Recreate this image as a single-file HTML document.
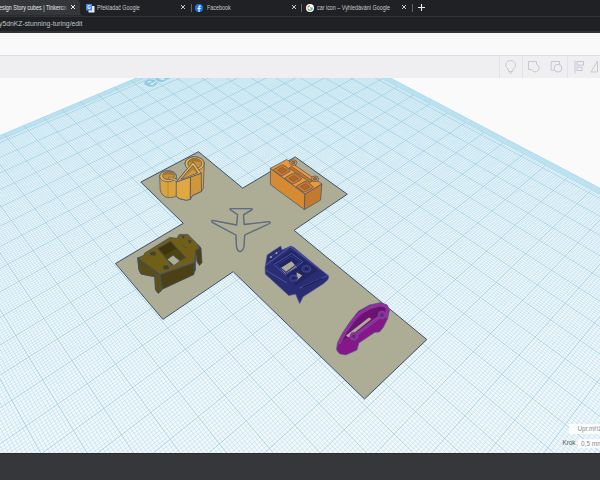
<!DOCTYPE html>
<html><head><meta charset="utf-8"><style>
html,body{margin:0;padding:0;width:600px;height:480px;overflow:hidden;background:#fafafa;font-family:"Liberation Sans",sans-serif}
.abs{position:absolute}
#tabs{left:0;top:0;width:600px;height:16px;background:#202124}
#toolbar{left:0;top:15.6px;width:600px;height:17.2px;background:#323337}
#omni{left:0;top:17.2px;width:600px;height:13.8px;background:#202124}
#head{left:0;top:32.5px;width:600px;height:22.5px;background:#f9f9fa;border-bottom:1px solid #dcdde2}
#tb{left:0;top:56px;width:600px;height:21.5px;background:#efeff2}
#bottom{left:0;top:453px;width:600px;height:27px;background:#36373b;border-top:1px solid #2a2b2e}
.t{position:absolute;top:3.5px;font-size:6.4px;line-height:8px;white-space:nowrap;color:#e8eaed;transform-origin:0 50%;transform:scaleX(0.84)}
.x{position:absolute;top:3px;width:8px;height:8px}
.sep{position:absolute;top:4px;width:1px;height:8px;background:#5f6368}
</style></head><body>
<svg class="abs" style="left:0;top:0" width="600" height="480" viewBox="0 0 600 480">
<rect x="0" y="0" width="600" height="480" fill="#fafafa"/>
<path d="M277.3 18.6L732.8 258.1L148.3 1115.7L-186.7 214.4Z" fill="#bfe3f1" stroke="#b0dcee" stroke-width="1"/>
<path d="M276.3 22.1L729.3 263.1L148.3 1115.7L-185.2 218.6Z" fill="#f4f8fa" stroke="#a9d3e6" stroke-width="0.6"/>
<path d="M280.6 20.3L-185.2 218.6M281.7 20.9L-184.7 220.0M284.0 22.1L-183.6 222.9M285.1 22.7L-183.1 224.3M286.2 23.3L-182.5 225.8M287.4 23.9L-182.0 227.2M288.5 24.5L-181.5 228.7M289.7 25.1L-180.9 230.1M290.8 25.7L-180.4 231.6M292.0 26.3L-179.8 233.1M293.1 26.9L-179.3 234.6M295.4 28.1L-178.1 237.6M296.6 28.7L-177.6 239.1M297.8 29.4L-177.0 240.6M299.0 30.0L-176.4 242.1M300.1 30.6L-175.9 243.7M301.3 31.2L-175.3 245.2M302.5 31.8L-174.7 246.8M303.7 32.5L-174.1 248.3M304.9 33.1L-173.6 249.9M307.3 34.4L-172.4 253.1M308.5 35.0L-171.8 254.7M309.7 35.6L-171.2 256.3M310.9 36.3L-170.6 257.9M312.2 36.9L-170.0 259.5M313.4 37.6L-169.4 261.2M314.6 38.2L-168.8 262.8M315.8 38.9L-168.2 264.4M317.1 39.5L-167.5 266.1M319.6 40.8L-166.3 269.5M320.8 41.5L-165.7 271.1M322.1 42.1L-165.0 272.8M323.3 42.8L-164.4 274.5M324.6 43.5L-163.8 276.3M325.9 44.1L-163.1 278.0M327.1 44.8L-162.5 279.7M328.4 45.5L-161.8 281.5M329.7 46.2L-161.2 283.2M332.3 47.5L-159.9 286.8M333.6 48.2L-159.2 288.5M334.9 48.9L-158.5 290.3M336.2 49.6L-157.9 292.2M337.5 50.3L-157.2 294.0M338.8 50.9L-156.5 295.8M340.1 51.6L-155.8 297.6M341.5 52.3L-155.1 299.5M342.8 53.0L-154.4 301.3M345.5 54.4L-153.0 305.1M346.8 55.1L-152.3 307.0M348.2 55.9L-151.6 308.9M349.5 56.6L-150.9 310.8M350.9 57.3L-150.2 312.7M352.2 58.0L-149.5 314.7M353.6 58.7L-148.8 316.6M355.0 59.4L-148.0 318.6M356.4 60.2L-147.3 320.6M359.1 61.6L-145.8 324.6M360.5 62.4L-145.1 326.6M361.9 63.1L-144.3 328.6M363.3 63.8L-143.6 330.6M364.8 64.6L-142.8 332.7M366.2 65.3L-142.0 334.7M367.6 66.1L-141.3 336.8M369.0 66.8L-140.5 338.9M370.5 67.6L-139.7 341.0M373.3 69.1L-138.1 345.2M374.8 69.9L-137.3 347.4M376.2 70.6L-136.5 349.5M377.7 71.4L-135.7 351.7M379.2 72.2L-134.9 353.9M380.6 72.9L-134.1 356.1M382.1 73.7L-133.3 358.3M383.6 74.5L-132.4 360.5M385.1 75.3L-131.6 362.7M388.1 76.8L-129.9 367.3M389.6 77.6L-129.1 369.5M391.1 78.4L-128.2 371.8M392.6 79.2L-127.4 374.1M394.1 80.0L-126.5 376.5M395.7 80.8L-125.6 378.8M397.2 81.6L-124.8 381.2M398.7 82.4L-123.9 383.5M400.3 83.3L-123.0 385.9M403.4 84.9L-121.2 390.8M405.0 85.7L-120.3 393.2M406.5 86.5L-119.4 395.7M408.1 87.4L-118.5 398.1M409.7 88.2L-117.5 400.6M411.3 89.0L-116.6 403.1M412.9 89.9L-115.7 405.6M414.5 90.7L-114.7 408.2M416.1 91.6L-113.8 410.7M419.3 93.3L-111.9 415.9M421.0 94.1L-110.9 418.5M422.6 95.0L-109.9 421.1M424.2 95.9L-108.9 423.8M425.9 96.7L-107.9 426.5M427.5 97.6L-106.9 429.1M429.2 98.5L-105.9 431.8M430.9 99.3L-104.9 434.6M432.5 100.2L-103.9 437.3M435.9 102.0L-101.8 442.9M437.6 102.9L-100.8 445.7M439.3 103.8L-99.7 448.5M441.0 104.7L-98.7 451.3M442.7 105.6L-97.6 454.2M444.5 106.5L-96.6 457.1M446.2 107.4L-95.5 460.0M447.9 108.3L-94.4 462.9M449.7 109.2L-93.3 465.9M453.2 111.1L-91.1 471.8M455.0 112.0L-89.9 474.8M456.7 112.9L-88.8 477.9M458.5 113.9L-87.7 480.9M460.3 114.8L-86.5 484.0M462.1 115.8L-85.4 487.1M463.9 116.7L-84.2 490.3M465.7 117.7L-83.0 493.4M467.5 118.6L-81.9 496.6M471.2 120.6L-79.5 503.0M473.1 121.5L-78.3 506.3M474.9 122.5L-77.0 509.6M476.8 123.5L-75.8 512.9M478.6 124.5L-74.6 516.2M480.5 125.4L-73.3 519.6M482.4 126.4L-72.1 522.9M484.3 127.4L-70.8 526.4M486.2 128.4L-69.5 529.8M490.0 130.4L-66.9 536.8M491.9 131.5L-65.6 540.3M493.9 132.5L-64.3 543.8M495.8 133.5L-63.0 547.4M497.8 134.5L-61.6 551.0M499.7 135.6L-60.3 554.7M501.7 136.6L-58.9 558.3M503.7 137.6L-57.5 562.0M505.7 138.7L-56.1 565.8M509.7 140.8L-53.3 573.3M511.7 141.8L-51.9 577.2M513.7 142.9L-50.5 581.0M515.7 144.0L-49.0 584.9M517.8 145.0L-47.6 588.8M519.8 146.1L-46.1 592.8M521.9 147.2L-44.6 596.8M523.9 148.3L-43.1 600.8M526.0 149.4L-41.6 604.9M530.2 151.6L-38.5 613.1M532.3 152.7L-37.0 617.3M534.4 153.8L-35.4 621.5M536.6 154.9L-33.9 625.8M538.7 156.0L-32.3 630.0M540.8 157.2L-30.7 634.4M543.0 158.3L-29.0 638.7M545.2 159.4L-27.4 643.1M547.3 160.6L-25.7 647.6M551.7 162.9L-22.4 656.6M553.9 164.0L-20.7 661.1M556.1 165.2L-19.0 665.7M558.4 166.4L-17.3 670.4M560.6 167.6L-15.5 675.1M562.8 168.7L-13.8 679.8M565.1 169.9L-12.0 684.6M567.4 171.1L-10.2 689.4M569.7 172.3L-8.4 694.3M574.2 174.7L-4.7 704.2M576.6 176.0L-2.8 709.2M578.9 177.2L-0.9 714.3M581.2 178.4L1.0 719.4M583.6 179.6L2.9 724.6M585.9 180.9L4.8 729.8M588.3 182.1L6.8 735.0M590.7 183.4L8.8 740.4M593.1 184.6L10.7 745.7M597.9 187.2L14.8 756.6M600.3 188.4L16.9 762.2M602.8 189.7L18.9 767.8M605.2 191.0L21.0 773.4M607.7 192.3L23.2 779.1M610.1 193.6L25.3 784.9M612.6 194.9L27.5 790.7M615.1 196.2L29.7 796.6M617.6 197.6L31.9 802.6M622.7 200.2L36.4 814.7M625.3 201.6L38.7 820.8M627.8 202.9L41.0 827.0M630.4 204.3L43.3 833.3M633.0 205.6L45.7 839.7M635.6 207.0L48.1 846.1M638.2 208.4L50.5 852.6M640.8 209.8L52.9 859.1M643.5 211.1L55.4 865.8M648.8 213.9L60.4 879.3M651.5 215.4L62.9 886.1M654.2 216.8L65.5 893.1M656.9 218.2L68.1 900.1M659.6 219.6L70.8 907.2M662.4 221.1L73.4 914.4M665.1 222.5L76.1 921.6M667.9 224.0L78.9 929.0M670.7 225.4L81.6 936.4M676.3 228.4L87.2 951.5M679.1 229.9L90.1 959.2M682.0 231.4L93.0 967.0M684.8 232.9L95.9 974.9M687.7 234.4L98.9 982.9M690.6 235.9L101.9 991.0M693.5 237.4L105.0 999.2M696.4 239.0L108.0 1007.5M699.4 240.5L111.2 1015.9M705.3 243.6L117.5 1033.0M708.3 245.2L120.8 1041.7M711.3 246.8L124.0 1050.5M714.3 248.4L127.4 1059.5M717.3 250.0L130.7 1068.5M720.4 251.6L134.2 1077.7M723.4 253.2L137.6 1087.0M726.5 254.8L141.1 1096.4M729.6 256.4L144.7 1106.0M272.4 20.6L728.9 263.8M271.2 21.1L727.9 265.2M268.8 22.1L725.9 268.1M267.6 22.7L725.0 269.5M266.4 23.2L724.0 270.9M265.2 23.7L723.0 272.4M264.0 24.2L722.0 273.9M262.8 24.7L721.0 275.3M261.5 25.2L720.0 276.8M260.3 25.7L719.0 278.3M259.1 26.3L718.0 279.7M256.6 27.3L715.9 282.7M255.4 27.8L714.9 284.2M254.1 28.3L713.9 285.8M252.9 28.9L712.9 287.3M251.6 29.4L711.8 288.8M250.4 29.9L710.8 290.3M249.1 30.5L709.7 291.9M247.9 31.0L708.7 293.4M246.6 31.5L707.6 295.0M244.1 32.6L705.5 298.1M242.8 33.1L704.4 299.7M241.5 33.7L703.3 301.3M240.2 34.2L702.2 302.9M238.9 34.8L701.1 304.5M237.7 35.3L700.0 306.1M236.4 35.8L698.9 307.7M235.1 36.4L697.8 309.3M233.8 36.9L696.7 311.0M231.2 38.0L694.5 314.3M229.8 38.6L693.3 315.9M228.5 39.2L692.2 317.6M227.2 39.7L691.0 319.3M225.9 40.3L689.9 321.0M224.6 40.8L688.7 322.7M223.2 41.4L687.6 324.4M221.9 42.0L686.4 326.1M220.6 42.5L685.2 327.8M217.9 43.7L682.9 331.3M216.5 44.2L681.7 333.0M215.2 44.8L680.5 334.8M213.8 45.4L679.3 336.5M212.4 45.9L678.1 338.3M211.1 46.5L676.9 340.1M209.7 47.1L675.6 341.9M208.3 47.7L674.4 343.7M207.0 48.3L673.2 345.5M204.2 49.4L670.7 349.1M202.8 50.0L669.4 351.0M201.4 50.6L668.2 352.8M200.0 51.2L666.9 354.7M198.6 51.8L665.6 356.5M197.2 52.4L664.4 358.4M195.8 53.0L663.1 360.3M194.4 53.6L661.8 362.2M192.9 54.2L660.5 364.1M190.1 55.4L657.9 368.0M188.7 56.0L656.5 369.9M187.2 56.6L655.2 371.9M185.8 57.2L653.9 373.8M184.3 57.8L652.5 375.8M182.9 58.4L651.2 377.8M181.4 59.0L649.8 379.8M180.0 59.6L648.4 381.8M178.5 60.3L647.1 383.8M175.6 61.5L644.3 387.9M174.1 62.1L642.9 389.9M172.6 62.7L641.5 392.0M171.1 63.4L640.1 394.0M169.6 64.0L638.7 396.1M168.2 64.6L637.2 398.2M166.7 65.3L635.8 400.3M165.2 65.9L634.4 402.5M163.6 66.5L632.9 404.6M160.6 67.8L630.0 408.9M159.1 68.5L628.5 411.1M157.6 69.1L627.0 413.2M156.0 69.8L625.5 415.4M154.5 70.4L624.0 417.6M153.0 71.0L622.5 419.9M151.4 71.7L621.0 422.1M149.9 72.4L619.4 424.3M148.3 73.0L617.9 426.6M145.2 74.3L614.8 431.2M143.6 75.0L613.2 433.4M142.0 75.7L611.7 435.8M140.5 76.3L610.1 438.1M138.9 77.0L608.5 440.4M137.3 77.7L606.9 442.8M135.7 78.3L605.3 445.1M134.1 79.0L603.6 447.5M132.5 79.7L602.0 449.9M129.3 81.1L598.7 454.8M127.6 81.7L597.0 457.2M126.0 82.4L595.4 459.7M124.4 83.1L593.7 462.1M122.7 83.8L592.0 464.6M121.1 84.5L590.3 467.1M119.5 85.2L588.6 469.6M117.8 85.9L586.8 472.2M116.1 86.6L585.1 474.7M112.8 88.0L581.6 479.8M111.1 88.7L579.8 482.4M109.5 89.4L578.1 485.1M107.8 90.1L576.3 487.7M106.1 90.8L574.5 490.3M104.4 91.5L572.6 493.0M102.7 92.3L570.8 495.7M101.0 93.0L569.0 498.4M99.3 93.7L567.1 501.1M95.8 95.2L563.4 506.6M94.1 95.9L561.5 509.3M92.4 96.6L559.6 512.1M90.6 97.4L557.7 514.9M88.9 98.1L555.8 517.7M87.1 98.8L553.9 520.6M85.4 99.6L551.9 523.4M83.6 100.3L549.9 526.3M81.8 101.1L548.0 529.2M78.3 102.6L544.0 535.0M76.5 103.3L542.0 538.0M74.7 104.1L539.9 541.0M72.9 104.8L537.9 544.0M71.1 105.6L535.9 547.0M69.3 106.4L533.8 550.0M67.5 107.1L531.7 553.1M65.6 107.9L529.6 556.1M63.8 108.7L527.5 559.2M60.1 110.2L523.2 565.5M58.3 111.0L521.1 568.7M56.4 111.8L518.9 571.8M54.6 112.6L516.7 575.0M52.7 113.4L514.5 578.3M50.8 114.2L512.3 581.5M49.0 114.9L510.1 584.8M47.1 115.7L507.8 588.1M45.2 116.5L505.6 591.4M41.4 118.1L501.0 598.1M39.5 119.0L498.7 601.5M37.5 119.8L496.4 604.9M35.6 120.6L494.0 608.4M33.7 121.4L491.7 611.8M31.7 122.2L489.3 615.3M29.8 123.0L486.9 618.8M27.8 123.9L484.5 622.4M25.9 124.7L482.0 626.0M21.9 126.3L477.1 633.2M20.0 127.2L474.6 636.8M18.0 128.0L472.1 640.5M16.0 128.9L469.6 644.2M14.0 129.7L467.1 647.9M12.0 130.6L464.5 651.7M9.9 131.4L461.9 655.5M7.9 132.3L459.3 659.3M5.9 133.1L456.7 663.1M1.8 134.8L451.4 670.9M-0.3 135.7L448.7 674.8M-2.3 136.6L446.0 678.8M-4.4 137.5L443.3 682.8M-6.5 138.3L440.5 686.8M-8.5 139.2L437.8 690.9M-10.6 140.1L435.0 695.0M-12.7 141.0L432.2 699.1M-14.8 141.9L429.3 703.3M-19.1 143.6L423.6 711.7M-21.2 144.5L420.7 715.9M-23.3 145.4L417.8 720.2M-25.5 146.4L414.8 724.5M-27.6 147.3L411.9 728.9M-29.8 148.2L408.9 733.3M-31.9 149.1L405.9 737.7M-34.1 150.0L402.8 742.2M-36.3 150.9L399.7 746.7M-40.7 152.8L393.5 755.8M-42.9 153.7L390.4 760.4M-45.1 154.6L387.2 765.1M-47.4 155.6L384.0 769.8M-49.6 156.5L380.8 774.5M-51.8 157.5L377.5 779.3M-54.1 158.4L374.2 784.1M-56.3 159.4L370.9 789.0M-58.6 160.3L367.6 793.9M-63.2 162.3L360.8 803.8M-65.5 163.2L357.4 808.8M-67.8 164.2L353.9 813.9M-70.1 165.2L350.4 819.0M-72.4 166.2L346.9 824.2M-74.7 167.1L343.4 829.4M-77.0 168.1L339.8 834.7M-79.4 169.1L336.2 840.0M-81.7 170.1L332.5 845.3M-86.5 172.1L325.1 856.2M-88.9 173.1L321.4 861.7M-91.3 174.1L317.6 867.2M-93.7 175.1L313.8 872.8M-96.1 176.1L309.9 878.5M-98.5 177.2L306.0 884.2M-100.9 178.2L302.1 889.9M-103.4 179.2L298.1 895.8M-105.8 180.3L294.1 901.6M-110.7 182.3L286.0 913.5M-113.2 183.4L281.9 919.6M-115.7 184.4L277.8 925.7M-118.2 185.5L273.6 931.8M-120.7 186.5L269.3 938.0M-123.2 187.6L265.1 944.3M-125.7 188.7L260.7 950.6M-128.3 189.7L256.4 957.0M-130.8 190.8L252.0 963.5M-135.9 193.0L243.0 976.6M-138.5 194.1L238.5 983.3M-141.1 195.2L233.9 990.0M-143.7 196.3L229.3 996.8M-146.3 197.4L224.6 1003.6M-148.9 198.5L219.9 1010.6M-151.6 199.6L215.1 1017.6M-154.2 200.7L210.3 1024.7M-156.9 201.8L205.4 1031.8M-162.2 204.1L195.5 1046.3M-164.9 205.2L190.5 1053.7M-167.6 206.3L185.4 1061.2M-170.3 207.5L180.3 1068.7M-173.0 208.6L175.1 1076.3M-175.7 209.8L169.8 1084.0M-178.5 210.9L164.5 1091.8M-181.2 212.1L159.2 1099.7M-184.0 213.2L153.7 1107.6" stroke="#abdaec" stroke-width="0.5" fill="none"/>
<path d="M278.6 23.3L-184.1 221.5M290.0 29.4L-178.7 236.1M301.8 35.7L-173.0 251.5M314.0 42.2L-166.9 267.8M326.7 48.9L-160.5 285.0M339.8 55.9L-153.7 303.2M353.4 63.1L-146.6 322.6M367.6 70.7L-138.9 343.1M382.2 78.5L-130.8 365.0M397.5 86.6L-122.1 388.3M413.4 95.0L-112.8 413.3M429.9 103.8L-102.9 440.1M447.1 113.0L-92.2 468.8M465.1 122.5L-80.7 499.8M483.9 132.5L-68.2 533.3M503.4 142.9L-54.7 569.5M523.9 153.8L-40.1 609.0M545.4 165.3L-24.1 652.0M567.9 177.2L-6.5 699.2M591.5 189.8L12.8 751.2M616.3 202.9L34.1 808.6M642.3 216.8L57.9 872.5M669.8 231.4L84.4 943.9M698.8 246.8L114.3 1024.4M729.3 263.1L148.3 1115.7M270.0 21.6L726.9 266.6M257.9 26.8L717.0 281.2M245.3 32.1L706.5 296.5M232.5 37.5L695.6 312.6M219.2 43.1L684.1 329.5M205.6 48.8L671.9 347.3M191.5 54.8L659.2 366.0M177.0 60.9L645.7 385.8M162.1 67.2L631.4 406.7M146.7 73.7L616.4 428.9M130.9 80.4L600.4 452.3M114.5 87.3L583.4 477.3M97.6 94.4L565.3 503.8M80.1 101.8L546.0 532.1M62.0 109.4L525.4 562.4M43.3 117.3L503.3 594.8M23.9 125.5L479.6 629.5M3.8 134.0L454.1 667.0M-16.9 142.8L426.5 707.4M-38.5 151.9L396.6 751.2M-60.9 161.3L364.2 798.8M-84.1 171.1L328.8 850.7M-108.3 181.3L290.1 907.5M-133.4 191.9L247.5 970.0M-159.5 202.9L200.5 1039.0M-186.7 214.4L148.3 1115.7" stroke="#86c3dd" stroke-width="0.65" fill="none"/>
<path d="M198.5 151.7L242.7 188.1L295.2 156.9L347.3 194.2L294.1 230.3L426.8 339.5L364.5 399.0L233.2 271.7L162.9 319.4L115.5 263.5L183.3 223.3L140.8 182.1Z" fill="#acad94" stroke="#3d5070" stroke-width="1" stroke-linejoin="round"/>
<text transform="matrix(1.971 -0.858 1.331 1.006 148.4 88)" font-family="Liberation Sans" font-weight="bold" font-size="10" fill="#8fcbe3">ed</text>
<!-- airplane outline -->
<path d="M230.8 208.6C230 208.6 229.8 209.3 230.4 209.8L237.6 214.8L236.6 225L212.6 220.4C211.6 220.3 211.4 221.8 212.2 222.3L235.9 235L236.5 246.7C237 249.5 238.5 251.5 240 251.5C241.5 251.5 243.5 249.5 244.1 245.5L244.7 235L269.6 223.5C270.4 223 270 221.5 269 221.6L244.1 224.5L243.5 214.8L251.8 209.8C252.5 209.3 252.2 208.6 251.5 208.6Z" fill="none" stroke="#52617c" stroke-width="1.35" stroke-linejoin="round"/>
<path d="M230.8 208.6C230 208.6 229.8 209.3 230.4 209.8L237.6 214.8L236.6 225L212.6 220.4C211.6 220.3 211.4 221.8 212.2 222.3L235.9 235L236.5 246.7C237 249.5 238.5 251.5 240 251.5C241.5 251.5 243.5 249.5 244.1 245.5L244.7 235L269.6 223.5C270.4 223 270 221.5 269 221.6L244.1 224.5L243.5 214.8L251.8 209.8C252.5 209.3 252.2 208.6 251.5 208.6Z" fill="none" stroke="#7d879a" stroke-width="0.35" stroke-linejoin="round"/>
<!-- orange QAP on top arm -->
<g stroke="#41537a" stroke-width="0.75" stroke-linejoin="round">
 <path d="M159.7 176.3L160.2 190C161 194 164 197 168 197.6C171.5 197.8 174 197 176 196.2L179 198.5L186 200.2L190 199.3L192.5 195.5L197 193.5L201.5 191.3L203.3 188.5L204.2 163.8C204 159.5 199.5 156.8 194.6 156.8C189.5 156.8 185 159.5 185 163.8L187.5 168.5L176.25 181.9L176.3 176.3C176.3 173 172.5 170.8 168 170.8C163 170.9 159.7 173 159.7 176.3Z" fill="#dba33f"/>
 <path d="M176.3 181.9L190.5 177L190.3 199.5L186 200.2L179 198.5L176.2 196.2Z" fill="#e0a842"/>
 <path d="M190.5 177L201.3 173.1L201.5 191.3L192.5 195.5L190.3 199.5Z" fill="#cf9736"/>
 <path d="M168 181.8L168 197.6" fill="none" stroke="#b07c28" stroke-width="0.6"/>
 <ellipse cx="168" cy="176.3" rx="8.3" ry="5.5" fill="#e9b34e"/>
 <ellipse cx="168.5" cy="175.7" rx="6" ry="3.9" fill="#c7912f"/>
 <path d="M162.6 175.5C163.5 173.2 166 172 168.8 172C171.8 172 174 173.3 174.6 175.3C172 174.2 165.5 174.2 162.6 175.5Z" fill="#a87524" stroke="none"/>
 <path d="M169 176.6L178.5 180.2L177.5 181.8L168.5 178.2Z" fill="#e9b34e" stroke-width="0.5"/>
 <ellipse cx="194.6" cy="163.8" rx="9.6" ry="7" fill="#e9b34e"/>
 <ellipse cx="194.8" cy="163.5" rx="7" ry="5" fill="#c7912f"/>
 <path d="M188 162.8C189 159.8 191.8 158.6 194.8 158.6C198 158.6 200.8 160 201.6 162.6C198.8 161.2 191.5 161.2 188 162.8Z" fill="#a87524" stroke="none"/>
 <path d="M176.25 181.9L193.1 161.9L201.3 173.1Z" fill="#e9b34e"/>
 <path d="M180.8 179.3L192.8 165.6L197.9 172.7Z" fill="#b8852c"/>
 <path d="M183 178.3L193 170L196.5 172.8Z" fill="#d39c3a" stroke="none"/>
</g>
<!-- orange block on right arm -->
<g stroke="#46567a" stroke-width="0.75" stroke-linejoin="round">
 <path d="M270.4 168.3L305 194L304.3 209.6L270.4 184.6Z" fill="#d68a32"/>
 <path d="M305 194L321.9 183.9L320.6 200.1L304.3 209.6Z" fill="#c27a2d"/>
 <path d="M270.4 168.3L286.7 159.5L321.9 183.9L305 194Z" fill="#ec9834"/>
 <ellipse cx="293.3" cy="162.6" rx="3.6" ry="2.8" fill="#ec9834"/>
 <ellipse cx="293.3" cy="162.6" rx="1.8" ry="1.3" fill="#c26f20"/>
 <ellipse cx="315" cy="178.8" rx="3.6" ry="2.8" fill="#ec9834"/>
 <ellipse cx="315" cy="178.8" rx="1.8" ry="1.3" fill="#c26f20"/>
 <path d="M274.2 169.2L281.2 165.4C282.5 164.8 283.6 165 284.5 165.7L289.6 169.6C290.4 170.3 290.2 171.2 289.2 171.8L283 175.2C281.8 175.8 280.6 175.6 279.8 175L274.2 171C273.3 170.4 273.3 169.8 274.2 169.2Z" fill="#d27b24"/>
 <path d="M277.5 170L282.8 167.2L287 170.5L281.8 173.3Z" fill="#b9671c" stroke-width="0.5"/>
 <path d="M285.6 177.4L292.6 173.6C293.9 173 295 173.2 295.9 173.9L301 177.8C301.8 178.5 301.6 179.4 300.6 180L294.4 183.4C293.2 184 292 183.8 291.2 183.2L285.6 179.2C284.7 178.6 284.7 178 285.6 177.4Z" fill="#d27b24"/>
 <path d="M288.9 178.2L294.2 175.4L298.4 178.7L293.2 181.5Z" fill="#b9671c" stroke-width="0.5"/>
 <path d="M297.1 185.6L304.1 181.8C305.4 181.2 306.5 181.4 307.4 182.1L312.5 186C313.3 186.7 313.1 187.6 312.1 188.2L305.9 191.6C304.7 192.2 303.5 192 302.7 191.4L297.1 187.4C296.2 186.8 296.2 186.2 297.1 185.6Z" fill="#d27b24"/>
 <path d="M300.4 186.4L305.7 183.6L309.9 186.9L304.7 189.7Z" fill="#b9671c" stroke-width="0.5"/>
 <path d="M291.5 166.5L312.5 181L310 182.5L289 168Z" fill="#c9741f"/>
</g>
<!-- olive box on left arm -->
<g stroke="#3e5070" stroke-width="0.75" stroke-linejoin="round">
 <path d="M137.5 258L139 270L141 274L155 276.8L155.5 289.5L158 293.2L160 292L162.5 289L193 274.5L195.5 270L195.6 250Z" fill="#504414"/>
 <path d="M195 247L198 244.5L201 248L202 262.5L199.5 265.5L197 262Z" fill="#4c4112"/>
 <path d="M138 259.5L156.5 271.5L155 276.8L141 274L139 270Z" fill="#5a4d15"/>
 <path d="M154.5 274.5L160 274.5L162.5 289L158 293.2L155.5 289.5Z" fill="#5f5216"/>
 <path d="M160 274.5L194 263L194 274.5L162.5 289Z" fill="#4c4114"/>
 <path d="M137.5 258L143.5 255.5L144.8 253L169.8 237.5L176.9 238.3L179.2 234.4L187.8 234.4L197.2 243.75L199.5 248.4L195.6 250L194.5 262.5L160 274.5L156.5 271.5Z" fill="#725f17"/>
 <path d="M157.5 248.4L170.6 241L186 257.8L171.4 265Z" fill="#4f430e"/>
 <path d="M159 248.6L170.4 242.3L176 248.5L165 255Z" fill="#3f350a" stroke="none"/>
 <path d="M167.2 259.6L173 255.2L180 261L174 265.5Z" fill="#acad94"/>
 <ellipse cx="153" cy="253.6" rx="3" ry="2.2" fill="#4f430e"/>
 <ellipse cx="166" cy="267.5" rx="3" ry="2.2" fill="#4f430e"/>
 <path d="M181 236L184.5 235.5L183.5 239Z" fill="#4f430e" stroke-width="0.5"/>
 <path d="M187.5 240L192 240.5L190 244Z" fill="#4f430e" stroke-width="0.5"/>
 <path d="M182.5 245L186 248" stroke-width="1" fill="none"/>
</g>
<!-- blue object -->
<g stroke-linejoin="round">
 <path d="M267.2 254.9L280.7 246.1L282 250L290.9 246.1L294 247.5L320 269.1L328.7 275.9L328 279.5L324 283.3L303 296.8L299.7 303.6L295.6 294.1L288.8 295.5L265.3 274L265.1 267.5Z" fill="#2b2d72" stroke="#4953a3" stroke-width="0.7"/>
 <path d="M272.8 262.5L291.2 250.5L318 270L296 285.5Z" fill="#232562"/>
 <path d="M280 268.4L291.5 261.2L297 267.2L285.4 273.8Z" fill="#acad94"/>
 <path d="M296.6 272.2L302.2 275.6L297 280.6Z" fill="#acad94"/>
 <path d="M266 265L290.3 246.5L320 269.4" fill="none" stroke="#4953a3" stroke-width="1.1"/>
 <path d="M274 264.4L291.5 253.5L303 261.7L285.4 275.2Z" fill="none" stroke="#4953a3" stroke-width="1"/>
 <path d="M277 265L291.5 256L300 262L286 272.5Z" fill="none" stroke="#2f3388" stroke-width="1.2"/>
 <path d="M299.4 288.1L327.5 275.5M266 270.3L287 283" fill="none" stroke="#4953a3" stroke-width="1"/>
 <path d="M303 287L322 278.5" fill="none" stroke="#1c1d5c" stroke-width="1.2"/>
 <ellipse cx="306.4" cy="268.9" rx="4.3" ry="3.2" fill="#2d3078" stroke="#4953a3" stroke-width="0.8"/>
 <ellipse cx="306.4" cy="268.7" rx="1.7" ry="1.2" fill="#1e2060"/>
 <ellipse cx="293.75" cy="278.3" rx="4" ry="3" fill="#2d3078" stroke="#4953a3" stroke-width="0.8"/>
 <ellipse cx="293.75" cy="278.1" rx="1.6" ry="1.1" fill="#1e2060"/>
 <path d="M269 258L280 250.5" fill="none" stroke="#4953a3" stroke-width="0.8"/>
 <circle cx="271" cy="257" r="1" fill="#acad94"/><circle cx="276.5" cy="253" r="1" fill="#acad94"/>
</g>
<!-- magenta car -->
<g stroke-linejoin="round" stroke-linecap="round">
 <path d="M336.6 350L339.5 353.75L345.75 355L357 350L358.9 343L374.5 332.5L379.5 331.9L383.25 327.5L387.6 318.75L389.5 310L387 305L380.75 302.5L369.5 305L358.25 311.25L349.5 322.5L342 333.75L337.6 342.5Z" fill="#85178b" stroke="#55608a" stroke-width="0.7"/>
 <path d="M340.5 341.5L347 330L354.5 319.5L363 311L372.5 306.5L381 305L386 307.5L384 313L375 318L351 336Z" fill="#6c1274"/>
 <path d="M346 335.5L369 317.5L371.5 319L348.5 337.5Z" fill="#acad94"/>
 <path d="M339.5 342.5L345 332L352 322L360 313.5L369 308L379.5 304.8L386 306L388 310.5L386.5 316" fill="none" stroke="#55608a" stroke-width="3.1"/>
 <path d="M339.5 342.5L345 332L352 322L360 313.5L369 308L379.5 304.8L386 306L388 310.5L386.5 316" fill="none" stroke="#a8249f" stroke-width="2.1"/>
 <path d="M353.9 336.25L382 315" fill="none" stroke="#55608a" stroke-width="3.1"/>
 <path d="M353.9 336.25L382 315" fill="none" stroke="#a8249f" stroke-width="2.1"/>
 <path d="M348 327L356 318.5L365 311.5" fill="none" stroke="#8e1b90" stroke-width="0.8"/>
 <circle cx="353.9" cy="336.25" r="3.9" fill="#a3229e" stroke="#55608a" stroke-width="0.7"/>
 <circle cx="353.9" cy="336.25" r="2" fill="#7a1580" stroke="#55608a" stroke-width="0.5"/>
 <circle cx="382" cy="315" r="3.9" fill="#a3229e" stroke="#55608a" stroke-width="0.7"/>
 <circle cx="382" cy="315" r="2" fill="#7a1580" stroke="#55608a" stroke-width="0.5"/>
</g>

</svg>
<div id="tabs" class="abs">
 <svg class="abs" style="left:0;top:0" width="92" height="16"><path d="M0 0H76Q80 0 80 4V12Q80 15.5 84 15.5H0Z" fill="#35363a"/></svg>
 <div class="abs" style="left:0;top:0;width:67px;height:16px;overflow:hidden"><div class="t" id="t1" style="left:-1px">esign Story cubes | Tinkercad</div></div>
 <div class="abs" style="left:61px;top:2px;width:7px;height:12px;background:linear-gradient(90deg,rgba(53,54,58,0),#35363a)"></div>
 <svg class="x" style="left:69px" viewBox="0 0 8 8"><path d="M2 2L6 6M6 2L2 6" stroke="#e8eaed" stroke-width="1"/></svg>
 <svg class="abs" style="left:86px;top:4px" width="9" height="9" viewBox="0 0 9 9"><rect x="2.5" y="2" width="6" height="6.5" fill="#e8eaed"/><rect x="0" y="0" width="6" height="6.5" fill="#4285f4"/><text x="1.3" y="5" font-size="4.5" fill="#fff" font-family="Liberation Sans" font-weight="bold">G</text></svg>
 <div class="t" style="left:96.5px;color:#c5c8cc">Překladač Google</div>
 <svg class="x" style="left:179px" viewBox="0 0 8 8"><path d="M2 2L6 6M6 2L2 6" stroke="#c5c8cc" stroke-width="1"/></svg>
 <div class="sep" style="left:190.5px"></div>
 <svg class="abs" style="left:195px;top:3.5px" width="8" height="8" viewBox="0 0 8 8"><circle cx="4" cy="4" r="4" fill="#1877f2"/><path d="M4.6 8V5H5.6L5.8 3.9H4.6V3.2C4.6 2.9 4.7 2.7 5.1 2.7H5.8V1.7C5.6 1.7 5.3 1.6 4.9 1.6C4.1 1.6 3.5 2.1 3.5 3V3.9H2.6V5H3.5V8Z" fill="#fff"/></svg>
 <div class="t" style="left:207px;color:#c5c8cc">Facebook</div>
 <svg class="x" style="left:290px" viewBox="0 0 8 8"><path d="M2 2L6 6M6 2L2 6" stroke="#c5c8cc" stroke-width="1"/></svg>
 <div class="sep" style="left:301px"></div>
 <svg class="abs" style="left:306px;top:3.5px" width="8" height="8" viewBox="0 0 8 8"><circle cx="4" cy="4" r="4" fill="#fff"/><path d="M4 1.2A2.8 2.8 0 0 0 1.5 2.7L2.4 3.4A1.8 1.8 0 0 1 4 2.2Z" fill="#ea4335"/><path d="M1.5 2.7A2.8 2.8 0 0 0 1.6 5.4L2.4 4.7A1.8 1.8 0 0 1 2.4 3.4Z" fill="#fbbc05"/><path d="M1.6 5.4A2.8 2.8 0 0 0 6.3 5.6L5.5 4.9A1.8 1.8 0 0 1 2.4 4.7Z" fill="#34a853"/><path d="M6.3 5.6A2.8 2.8 0 0 0 6.8 3.6H4V4.5H5.6A1.8 1.8 0 0 1 5.5 4.9Z" fill="#4285f4"/></svg>
 <div class="t" style="left:317px;color:#c5c8cc">car icon – Vyhledávání Google</div>
 <svg class="x" style="left:400px" viewBox="0 0 8 8"><path d="M2 2L6 6M6 2L2 6" stroke="#c5c8cc" stroke-width="1"/></svg>
 <div class="sep" style="left:411.5px"></div>
 <svg class="abs" style="left:417px;top:3px" width="9" height="9" viewBox="0 0 9 9"><path d="M4.5 1V8M1 4.5H8" stroke="#e8eaed" stroke-width="1.1"/></svg>
</div>
<div id="toolbar" class="abs"></div>
<div id="omni" class="abs"><div class="t" style="top:2.5px;left:-1px;color:#bdc1c6;font-size:6.8px;transform:none">y5dnKZ-stunning-turing/edit</div></div>
<div id="head" class="abs"></div>
<div id="tb" class="abs">
 <div class="abs" style="left:499px;top:0;width:1px;height:21.5px;background:#e2e3e8"></div>
 <div class="abs" style="left:522px;top:0;width:1px;height:21.5px;background:#e2e3e8"></div>
 <div class="abs" style="left:566.5px;top:0;width:1px;height:21.5px;background:#e2e3e8"></div>
 <svg class="abs" style="left:495px;top:0" width="105" height="22" viewBox="495 56 105 22" fill="none" stroke="#c3c9d2" stroke-width="1">
  <path d="M508 69C506 67.5 505.5 65.5 505.8 63.8C506.3 61.8 508.2 60.6 510.6 60.6C513 60.6 514.9 61.8 515.4 63.8C515.7 65.5 515.2 67.5 513.2 69L512.5 71.5H508.7Z"/>
  <path d="M509 73H512.2"/>
  <path d="M528.5 61.5H536.5V64.3A3.9 3.9 0 1 1 531.6 69.5H528.5Z"/>
  <path d="M551.2 61.5H559.5V64.2M551.2 61.5V70.2H554"/>
  <circle cx="558" cy="68.2" r="3.9"/>
  <path d="M575 60.5V73.5"/>
  <rect x="577" y="61.5" width="6.5" height="3.5"/>
  <rect x="577" y="67" width="5" height="3.5"/>
  <path d="M597.5 61L591 72H597.5Z"/>
 </svg>
</div>
<div class="abs" style="left:568.5px;top:424px;width:40px;height:9.5px;background:rgba(255,255,255,0.85);border-radius:1px"><div class="abs" style="left:9px;top:1px;font-size:6.3px;line-height:8px;color:#8a8d93;white-space:nowrap">Upr.mřížku</div></div>
<div class="abs" style="left:562.5px;top:439px;font-size:6.3px;line-height:8px;color:#55585e;white-space:nowrap">Krok</div>
<div class="abs" style="left:577.5px;top:438.5px;width:30px;height:9.5px;background:rgba(255,255,255,0.85);border-radius:1px"><div class="abs" style="left:3.5px;top:1px;font-size:6.5px;line-height:8px;color:#8a8d93;white-space:nowrap">0,5 mm</div></div>
<div id="bottom" class="abs"></div>
</body></html>
